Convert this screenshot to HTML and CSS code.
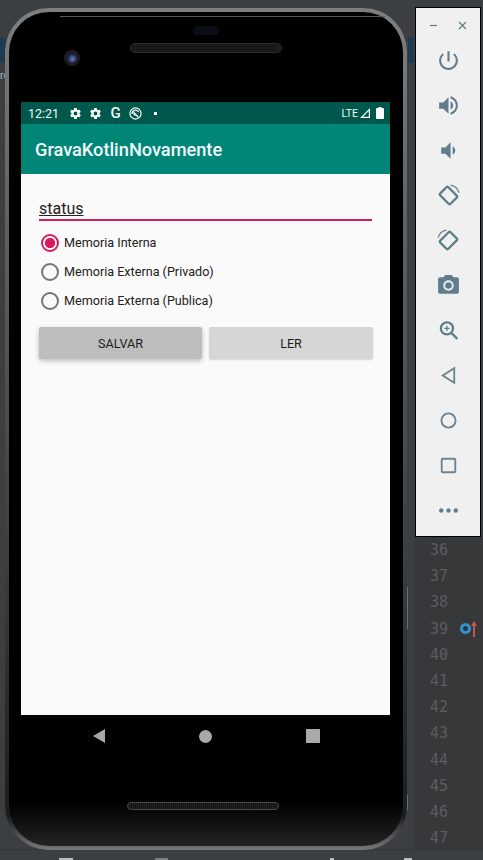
FILE: index.html
```html
<!DOCTYPE html>
<html lang="en">
<head>
  <meta charset="UTF-8">
  <title>GravaKotlinNovamente</title>
  <link rel="stylesheet" href="styles.css">
</head>
<body>
  <div class="desktop">
    <div class="ide-tab-left"></div>
    <div class="ide-tab-right"></div>
    <div class="ide-word">ro</div>
    <div class="ide-tick ide-tick-a"></div>
    <div class="ide-tick ide-tick-b"></div>

    <div class="phone">
      <div class="phone-top">
        <div class="earpiece"></div>
        <div class="speaker"></div>
        <div class="camera"></div>
      </div>

      <div class="screen">
        <div class="status-bar">
          <span class="time">12:21</span>
          <svg class="st-icon" viewBox="0 0 24 24"><path d="M19.4 13c.04-.32.1-.66.1-1s-.06-.68-.1-1l2.1-1.65c.2-.15.25-.42.13-.64l-2-3.46c-.12-.22-.39-.3-.61-.22l-2.49 1c-.52-.4-1.08-.73-1.69-.98l-.38-2.65A.49.49 0 0 0 14 2h-4c-.25 0-.46.18-.49.42l-.38 2.65c-.61.25-1.17.59-1.69.98l-2.49-1c-.23-.09-.49 0-.61.22l-2 3.46c-.13.22-.07.49.12.64L4.57 11c-.04.32-.07.66-.07 1s.03.68.07 1l-2.11 1.65c-.19.15-.25.42-.12.64l2 3.46c.12.22.39.3.61.22l2.49-1c.52.4 1.08.73 1.69.98l.38 2.65c.03.24.24.42.49.42h4c.25 0 .46-.18.49-.42l.38-2.65c.61-.25 1.17-.59 1.69-.98l2.49 1c.23.09.49 0 .61-.22l2-3.46c.12-.22.07-.49-.12-.64L19.4 13zM12 15.5a3.5 3.5 0 1 1 0-7 3.5 3.5 0 0 1 0 7z"/></svg>
          <svg class="st-icon" viewBox="0 0 24 24"><path d="M19.4 13c.04-.32.1-.66.1-1s-.06-.68-.1-1l2.1-1.65c.2-.15.25-.42.13-.64l-2-3.46c-.12-.22-.39-.3-.61-.22l-2.49 1c-.52-.4-1.08-.73-1.69-.98l-.38-2.65A.49.49 0 0 0 14 2h-4c-.25 0-.46.18-.49.42l-.38 2.65c-.61.25-1.17.59-1.69.98l-2.49-1c-.23-.09-.49 0-.61.22l-2 3.46c-.13.22-.07.49.12.64L4.57 11c-.04.32-.07.66-.07 1s.03.68.07 1l-2.11 1.65c-.19.15-.25.42-.12.64l2 3.46c.12.22.39.3.61.22l2.49-1c.52.4 1.08.73 1.69.98l.38 2.65c.03.24.24.42.49.42h4c.25 0 .46-.18.49-.42l.38-2.65c.61-.25 1.17-.59 1.69-.98l2.49 1c.23.09.49 0 .61-.22l2-3.46c.12-.22.07-.49-.12-.64L19.4 13zM12 15.5a3.5 3.5 0 1 1 0-7 3.5 3.5 0 0 1 0 7z"/></svg>
          <span class="st-g">G</span>
          <svg class="st-icon st-sync" viewBox="0 0 24 24"><circle cx="12" cy="12" r="10.300" fill="none" stroke="#fff" stroke-width="2.200"/><path d="M5.800 13a6.300 6.300 0 0 1 11.800-3.800" fill="none" stroke="#fff" stroke-width="2.200"/><path d="M8 8l10 9.500-2 1.800-3.500-3.800c-1.500 1-3.500.5-4.300-1z"/></svg>
          <span class="st-dot"></span>
          <span class="st-right">
            <span class="lte">LTE</span>
            <svg class="st-signal" viewBox="0 0 12 12"><path d="M11 1v10H1zM9.800 3.900L3.900 9.800h5.900z" fill-rule="evenodd"/></svg>
            <svg class="st-battery" viewBox="0 0 8 12"><path d="M2.500 0h3v1H7a1 1 0 0 1 1 1v9a1 1 0 0 1-1 1H1a1 1 0 0 1-1-1V2a1 1 0 0 1 1-1h1.500z"/></svg>
          </span>
        </div>
        <div class="app-bar">GravaKotlinNovamente</div>

        <div class="content">
          <div class="field"><span class="field-text">status</span></div>

          <div class="radio-group">
            <div class="radio-row">
              <span class="radio radio-on"></span>
              <span>Memoria Interna</span>
            </div>
            <div class="radio-row">
              <span class="radio"></span>
              <span>Memoria Externa (Privado)</span>
            </div>
            <div class="radio-row">
              <span class="radio"></span>
              <span>Memoria Externa (Publica)</span>
            </div>
          </div>

          <div class="buttons">
            <div class="btn btn-pressed">SALVAR</div>
            <div class="btn">LER</div>
          </div>
        </div>
      </div>

      <div class="phone-bottom">
        <div class="nav">
          <span class="nav-back"></span>
          <span class="nav-home"></span>
          <span class="nav-recent"></span>
        </div>
        <div class="speaker speaker-low"></div>
      </div>
    </div>

    <div class="side">
      <div class="toolbar">
        <div class="win-row">
          <svg class="win-icon" viewBox="0 0 9 9"><path d="M1 4.500h7"/></svg>
          <svg class="win-icon" viewBox="0 0 9 9"><path d="M1 1l7 7M8 1L1 8"/></svg>
        </div>
        <div class="tool"><svg viewBox="0 0 24 24"><path d="M13 3h-2v10h2V3zm4.830 2.170l-1.420 1.420C17.990 7.860 19 9.810 19 12c0 3.870-3.130 7-7 7s-7-3.130-7-7c0-2.190 1.010-4.140 2.580-5.420L6.170 5.170C4.230 6.820 3 9.260 3 12c0 4.970 4.030 9 9 9s9-4.030 9-9c0-2.740-1.230-5.180-3.170-6.830z"/></svg></div>
        <div class="tool"><svg viewBox="0 0 24 24"><path d="M3 9v6h4l5 5V4L7 9H3zm13.500 3c0-1.770-1.020-3.290-2.500-4.030v8.050c1.480-.730 2.500-2.250 2.500-4.020zM14 3.230v2.060c2.890.860 5 3.540 5 6.710s-2.110 5.850-5 6.710v2.060c4.010-.910 7-4.490 7-8.770s-2.990-7.860-7-8.770z"/></svg></div>
        <div class="tool"><svg viewBox="0 0 24 24"><path d="M5 9v6h4l5 5V4L9 9H5zm13.500 3c0-1.770-1.020-3.290-2.500-4.030v8.050c1.480-.730 2.500-2.250 2.500-4.020z"/></svg></div>
        <div class="tool"><svg viewBox="0 0 24 24"><g class="line"><rect x="5" y="6.500" width="14" height="11" rx="1" transform="rotate(45 12 12)"/><path class="thin" d="M14 2c3.800.6 6.900 3.500 8 7.200"/></g></svg></div>
        <div class="tool"><svg viewBox="0 0 24 24"><g class="line"><rect x="5" y="6.500" width="14" height="11" rx="1" transform="rotate(-45 12 12)"/><path class="thin" d="M10 2C6.200 2.600 3.100 5.500 2 9.200"/></g></svg></div>
        <div class="tool"><svg viewBox="0 0 24 24"><circle cx="12" cy="12" r="3.200"/><path d="M9 2L7.170 4H4c-1.100 0-2 .9-2 2v12c0 1.100.9 2 2 2h16c1.100 0 2-.9 2-2V6c0-1.100-.9-2-2-2h-3.170L15 2H9zm3 15c-2.760 0-5-2.240-5-5s2.240-5 5-5 5 2.240 5 5-2.240 5-5 5z"/></svg></div>
        <div class="tool"><svg viewBox="0 0 24 24"><g class="line"><circle cx="10.500" cy="10" r="5.800"/><path d="M15 14.500l5.500 5.500"/><path class="thin" d="M10.500 7.500v5M8 10h5"/></g></svg></div>
        <div class="tool"><svg viewBox="0 0 24 24"><g class="line line-soft"><path d="M17.500 5v14L6.500 12z"/></g></svg></div>
        <div class="tool"><svg viewBox="0 0 24 24"><g class="line line-soft"><circle cx="12" cy="12" r="6.800"/></g></svg></div>
        <div class="tool"><svg viewBox="0 0 24 24"><g class="line line-soft"><rect x="5.500" y="5.500" width="13" height="13" rx="1"/></g></svg></div>
        <div class="tool"><svg viewBox="0 0 24 24"><circle cx="5" cy="12" r="2.100"/><circle cx="12" cy="12" r="2.100"/><circle cx="19" cy="12" r="2.100"/></svg></div>
      </div>

      <div class="gutter">
        <div class="line-no">36</div>
        <div class="line-no">37</div>
        <div class="line-no">38</div>
        <div class="line-no">39<span class="mark"><span class="mark-dot"></span><svg class="mark-arrow" viewBox="0 0 6 16"><path d="M3 0l3 5H4v11H2V5H0z"/></svg></span></div>
        <div class="line-no">40</div>
        <div class="line-no">41</div>
        <div class="line-no">42</div>
        <div class="line-no">43</div>
        <div class="line-no">44</div>
        <div class="line-no">45</div>
        <div class="line-no">46</div>
        <div class="line-no">47</div>
        <div class="green-tip"></div>
      </div>
    </div>

    <div class="status-strip">
      <span class="strip-bit strip-a"></span>
      <span class="strip-bit strip-b"></span>
      <span class="strip-bit strip-c"></span>
      <span class="strip-bit strip-d"></span>
    </div>
  </div>
</body>
</html>
```

FILE: styles.css
```css
html, body {
  margin: 0;
  padding: 0;
  background-color: #3c3f41;
}

.desktop {
  position: relative;
  display: flex;
  width: 483px;
  height: 860px;
  overflow: hidden;
  background-color: #3c3f41;
  font-family: Roboto, sans-serif;
}

/* bits of the IDE that show round the emulator */
.ide-tab-left, .ide-tab-right {
  position: absolute;
  top: 38px;
  width: 6px;
  height: 25px;
  background-color: #1c3a52;
}

.ide-tab-left { left: 0; }
.ide-tab-right { left: 408px; }

.ide-word {
  position: absolute;
  left: 0;
  top: 69px;
  font-size: 11px;
  color: #a9b7c6;
}

.ide-tick {
  position: absolute;
  left: 407px;
  width: 1px;
  background-color: #6b6e70;
}

.ide-tick-a { top: 587px; height: 42px; }
.ide-tick-b { top: 795px; height: 15px; }

.status-strip {
  position: absolute;
  left: 0;
  right: 0;
  bottom: 0;
  height: 11px;
  box-sizing: border-box;
  border-top: 1px solid #333537;
  background-color: #3c3f41;
}

.strip-bit {
  position: absolute;
  bottom: 0;
  height: 2px;
  background-color: #b9bcbe;
}

.strip-a { left: 59px; width: 14px; }
.strip-b { left: 155px; width: 13px; background-color: #7b7e80; }
.strip-c { left: 330px; width: 4px; }
.strip-d { left: 404px; width: 8px; }

/* phone */
.phone {
  position: relative;
  z-index: 1;
  flex: none;
  box-sizing: border-box;
  width: 402px;
  height: 842px;
  margin: 8px 0 0 5px;
  padding: 0 13px 0 12px;
  border: 4px solid transparent;
  border-radius: 44px;
  background:
    linear-gradient(#000 calc(100% - 45px), #222324 100%) padding-box,
    linear-gradient(#7d7f80 0, #5f6162 25%, #3d3e3f 65%, #1c1d1e 96%, #77787a 100%) border-box;
}

.phone-top {
  position: relative;
  height: 90px;
  display: flex;
  flex-direction: column;
  align-items: center;
}

/* thin highlight under the top edge of the body */
.phone-top::before {
  content: "";
  position: absolute;
  left: 39px;
  right: 5px;
  top: 4px;
  height: 1px;
  background-color: #55585a;
}

.earpiece {
  width: 26px;
  height: 9px;
  margin-top: 14px;
  border-radius: 5px;
  background-color: #0b0d14;
}

.speaker {
  box-sizing: border-box;
  width: 152px;
  height: 10px;
  margin: 8px 0 0 1px;
  border: 1px solid #2e2e2e;
  border-radius: 5px;
  background: repeating-linear-gradient(90deg, #222 0, #222 1px, #121212 1px, #121212 2px);
}

.camera {
  position: absolute;
  left: 43px;
  top: 38px;
  width: 10px;
  height: 10px;
  border: 3px solid #1c1c22;
  border-radius: 50%;
  background: radial-gradient(circle at 55% 60%, #6d83c8 0, #1d2750 55%, #0c0f1d 100%);
}

.screen {
  width: 369px;
  height: 613px;
  display: flex;
  flex-direction: column;
  background-color: #fafafa;
}

.status-bar {
  flex: none;
  display: flex;
  align-items: center;
  box-sizing: border-box;
  height: 22px;
  padding: 0 6px 0 7px;
  background-color: #00574b;
  color: #f0f7f6;
}

.time {
  width: 41px;
  font-size: 12.5px;
}

.st-icon {
  width: 13px;
  height: 13px;
  margin-right: 7px;
  fill: #fff;
}

.st-g {
  width: 13px;
  margin-right: 7px;
  font-size: 15px;
  font-weight: 500;
  line-height: 13px;
  text-align: center;
}

.st-dot {
  width: 3px;
  height: 3px;
  margin-left: 5px;
  background-color: #fff;
}

.st-right {
  margin-left: auto;
  display: flex;
  align-items: center;
}

.lte {
  font-size: 10.5px;
  margin-right: 1px;
}

.st-signal {
  width: 12px;
  height: 12px;
  margin-right: 5px;
  fill: #fff;
}

.st-battery {
  width: 8px;
  height: 12px;
  fill: #fff;
}

.app-bar {
  flex: none;
  box-sizing: border-box;
  height: 50px;
  padding-left: 14px;
  background-color: #008577;
  color: #f2fafa;
  font-size: 18.2px;
  font-weight: 500;
  line-height: 51px;
}

.content {
  padding: 0 17px 0 18px;
}

.field {
  height: 47px;
  box-sizing: border-box;
  padding-top: 25px;
  border-bottom: 2px solid #d81b60;
  margin-right: 1px;
}

.field-text {
  font-size: 16px;
  line-height: 19px;
  color: #222;
  text-decoration: underline;
}

.radio-group {
  margin-top: 7px;
}

.radio-row {
  display: flex;
  align-items: center;
  gap: 5px;
  height: 29px;
  margin-left: 2px;
  font-size: 12.6px;
  line-height: 30px;
  color: #212121;
}

.radio {
  box-sizing: border-box;
  flex: none;
  width: 18px;
  height: 18px;
  border: 2px solid #757575;
  border-radius: 50%;
}

.radio-on {
  border-color: #d81b60;
  background: radial-gradient(circle, #d81b60 0, #d81b60 4.800px, transparent 5.400px);
}

.buttons {
  display: flex;
  gap: 7px;
  margin-top: 12px;
}

.btn {
  flex: none;
  width: 164px;
  height: 32px;
  border-radius: 2px;
  background-color: #d6d6d6;
  color: #1c1c1c;
  font-size: 12.6px;
  line-height: 34px;
  text-align: center;
  box-shadow: 0 1px 2px rgba(0, 0, 0, 0.15);
}

.btn-pressed {
  width: 163px;
  background-color: #bdbdbd;
  box-shadow: 0 2px 5px rgba(0, 0, 0, 0.25);
}

.phone-bottom {
  display: flex;
  flex-direction: column;
  align-items: center;
}

.nav {
  display: grid;
  grid-template-columns: repeat(3, 107px);
  justify-items: center;
  align-items: center;
  height: 14px;
  margin-top: 14px;
}

.nav-back {
  width: 0;
  height: 0;
  border-top: 7.500px solid transparent;
  border-bottom: 7.500px solid transparent;
  border-right: 12px solid #a9a9a9;
}

.nav-home {
  width: 13px;
  height: 13px;
  border-radius: 50%;
  background-color: #a9a9a9;
}

.nav-recent {
  width: 14px;
  height: 14px;
  background-color: #a9a9a9;
}

.speaker-low {
  margin: 59px 5px 0 0;
  height: 8px;
  border-color: #4a4a4a;
}

/* emulator tool window and the editor gutter behind it */
.side {
  flex: none;
  display: flex;
  flex-direction: column;
  width: 76px;
  margin-left: 9px;
}

.toolbar {
  box-sizing: border-box;
  flex: none;
  width: 66px;
  height: 530px;
  margin: 7px 0 0 -1px;
  border: 1px solid #000;
  background-color: #f0f0f0;
  position: relative;
  z-index: 1;
}

.win-row {
  display: flex;
  justify-content: space-between;
  height: 30px;
  padding: 13px 13px 0 13px;
  box-sizing: border-box;
}

.win-icon {
  width: 9px;
  height: 9px;
  fill: none;
  stroke: #607d8b;
  stroke-width: 1.2;
}

.tool {
  display: flex;
  justify-content: center;
  align-items: center;
  height: 45px;
}

.tool svg {
  width: 25px;
  height: 25px;
  fill: #607d8b;
}

.line {
  fill: none;
  stroke: #607d8b;
  stroke-width: 2.2;
}

.line .thin {
  stroke-width: 1.2;
}

.line-soft {
  stroke: #6f8490;
  stroke-width: 1.8;
}

.gutter {
  position: relative;
  flex: none;
  height: 312px;
  margin-left: -2px;
  padding: 0 0 0 16px;
  background-color: #36383a;
  font-family: "DejaVu Sans Mono", monospace;
  color: #5b5e60;
  font-size: 15px;
}

.line-no {
  position: relative;
  height: 26.2px;
  line-height: 26.2px;
}

.mark {
  position: absolute;
  left: 30px;
  top: 5px;
  display: flex;
  align-items: center;
}

.mark-dot {
  box-sizing: border-box;
  width: 11px;
  height: 11px;
  border: 3px solid #3592c4;
  border-radius: 50%;
  background-color: #1d3a4c;
}

.mark-arrow {
  width: 6px;
  height: 16px;
  fill: #c75450;
}

.green-tip {
  position: absolute;
  right: 0;
  top: 275px;
  width: 3px;
  height: 36px;
  border: 1px solid #5f7a52;
  border-right: none;
  border-radius: 3px 0 0 3px;
}
```
